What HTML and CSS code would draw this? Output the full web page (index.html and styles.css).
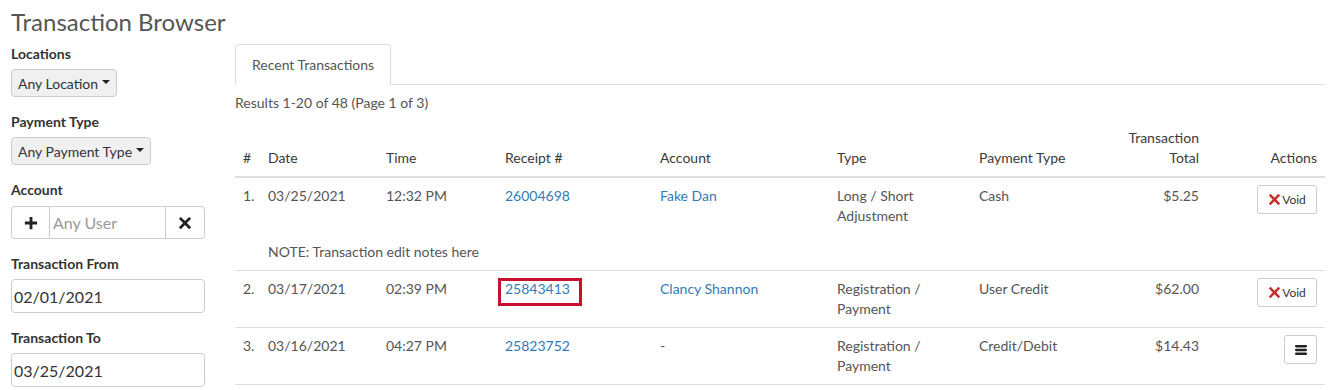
FILE: index.html
```html
<!DOCTYPE html>
<html lang="en">
<head>
    <meta charset="UTF-8">
    <meta name="viewport" content="width=device-width, initial-scale=1.0">
    <title>Transaction Browser</title>
    <link rel="stylesheet" href="styles.css">
</head>
<body>

<div class="page">
    <h1 class="page-title">Transaction Browser</h1>

    <div class="layout">
        <aside class="filters">
            <div class="field">
                <label>Locations</label>
                <button class="dropdown">Any Location <span class="caret"></span></button>
            </div>
            <div class="field">
                <label>Payment Type</label>
                <button class="dropdown">Any Payment Type <span class="caret"></span></button>
            </div>
            <div class="field field-group">
                <label>Account</label>
                <div class="input-group">
                    <span class="addon">
                        <svg viewBox="0 0 16 16" width="14" height="14"><path d="M6.4 1h3.2v5.4H15v3.2H9.6V15H6.4V9.6H1V6.4h5.4z"/></svg>
                    </span>
                    <input type="text" placeholder="Any User">
                    <span class="addon addon-right">
                        <svg viewBox="0 0 16 16" width="14" height="14"><path d="M3.2 1 8 5.8 12.8 1 15 3.2 10.2 8 15 12.8 12.8 15 8 10.2 3.2 15 1 12.8 5.8 8 1 3.2z"/></svg>
                    </span>
                </div>
            </div>
            <div class="field">
                <label>Transaction From</label>
                <input class="text-input" type="text" value="02/01/2021">
            </div>
            <div class="field">
                <label>Transaction To</label>
                <input class="text-input" type="text" value="03/25/2021">
            </div>
        </aside>

        <main class="results">
            <ul class="tabs">
                <li class="active">Recent Transactions</li>
            </ul>
            <p class="summary">Results 1-20 of 48 (Page 1 of 3)</p>

            <table class="tx-table">
                <colgroup>
                    <col style="width: 25px">
                    <col style="width: 118px">
                    <col style="width: 119px">
                    <col style="width: 155px">
                    <col style="width: 177px">
                    <col style="width: 142px">
                    <col style="width: 130px">
                    <col style="width: 106px">
                    <col>
                </colgroup>
                <thead>
                    <tr>
                        <th>#</th>
                        <th>Date</th>
                        <th>Time</th>
                        <th>Receipt #</th>
                        <th>Account</th>
                        <th>Type</th>
                        <th>Payment Type</th>
                        <th class="num">Transaction Total</th>
                        <th class="num">Actions</th>
                    </tr>
                </thead>
                <tbody>
                    <tr>
                        <td>1.</td>
                        <td>03/25/2021</td>
                        <td>12:32 PM</td>
                        <td><a href="#">26004698</a></td>
                        <td><a href="#">Fake Dan</a></td>
                        <td>Long / Short Adjustment</td>
                        <td>Cash</td>
                        <td class="num">$5.25</td>
                        <td class="num">
                            <button class="btn-void"><svg viewBox="0 0 16 16" width="13" height="13"><path d="M3.2 1 8 5.8 12.8 1 15 3.2 10.2 8 15 12.8 12.8 15 8 10.2 3.2 15 1 12.8 5.8 8 1 3.2z"/></svg>Void</button>
                        </td>
                    </tr>
                    <tr class="note-row">
                        <td></td>
                        <td colspan="8">NOTE: Transaction edit notes here</td>
                    </tr>
                </tbody>
                <tbody>
                    <tr>
                        <td>2.</td>
                        <td>03/17/2021</td>
                        <td>02:39 PM</td>
                        <td><a href="#" class="highlight">25843413</a></td>
                        <td><a href="#">Clancy Shannon</a></td>
                        <td>Registration / Payment</td>
                        <td>User Credit</td>
                        <td class="num">$62.00</td>
                        <td class="num">
                            <button class="btn-void"><svg viewBox="0 0 16 16" width="13" height="13"><path d="M3.2 1 8 5.8 12.8 1 15 3.2 10.2 8 15 12.8 12.8 15 8 10.2 3.2 15 1 12.8 5.8 8 1 3.2z"/></svg>Void</button>
                        </td>
                    </tr>
                </tbody>
                <tbody>
                    <tr>
                        <td>3.</td>
                        <td>03/16/2021</td>
                        <td>04:27 PM</td>
                        <td><a href="#">25823752</a></td>
                        <td>-</td>
                        <td>Registration / Payment</td>
                        <td>Credit/Debit</td>
                        <td class="num">$14.43</td>
                        <td class="num">
                            <button class="btn-menu"><svg viewBox="0 0 12 10" width="12" height="10"><rect width="12" height="2.4" rx="1.1"/><rect y="3.8" width="12" height="2.4" rx="1.1"/><rect y="7.6" width="12" height="2.4" rx="1.1"/></svg></button>
                        </td>
                    </tr>
                </tbody>
            </table>
        </main>
    </div>
</div>

</body>
</html>
```

FILE: styles.css
```css
body {
    font-family: Lato, "Liberation Sans", Arial, sans-serif;
    font-size: 14px;
    line-height: 20px;
    margin: 0;
    padding: 0;
    color: #555;
    background: #fff;
}

.page {
    padding: 0 7px 0 11px;
}

.page-title {
    margin: 0;
    padding: 6px 0 6px;
    font-size: 24px;
    line-height: 32px;
    font-weight: 400;
    color: #555;
}

.layout {
    display: grid;
    grid-template-columns: 194px 1fr;
    column-gap: 30px;
}

/* sidebar filters */

.field {
    display: flex;
    flex-direction: column;
    align-items: flex-start;
    margin-bottom: 15px;
}

.field label {
    font-weight: 700;
    color: #333;
    margin-bottom: 5px;
}

.field-group label {
    margin-bottom: 6px;
}

.dropdown {
    font-family: inherit;
    font-size: 14px;
    color: #333;
    height: 28px;
    padding: 0 6px 0 6px;
    background: #f0f0f0;
    border: 1px solid #ccc;
    border-radius: 4px;
    display: flex;
    align-items: center;
    gap: 4px;
}

.caret {
    display: inline-block;
    border-top: 4px solid #222;
    border-left: 4px solid transparent;
    border-right: 4px solid transparent;
    margin-top: -2px;
}

.input-group {
    display: flex;
    width: 100%;
    height: 33px;
}

.input-group .addon {
    width: 39px;
    flex: none;
    display: flex;
    align-items: center;
    justify-content: center;
    border: 1px solid #ccc;
    border-radius: 4px 0 0 4px;
    box-sizing: border-box;
    fill: #222;
}

.input-group .addon-right {
    width: 40px;
    border-radius: 0 4px 4px 0;
}

.input-group input {
    flex: 1;
    min-width: 0;
    border: 1px solid #ccc;
    border-left: none;
    border-right: none;
    font-family: inherit;
    font-size: 16px;
    padding: 0 3px;
    outline: none;
}

.input-group input::placeholder {
    color: #999;
}

.text-input {
    width: 100%;
    height: 34px;
    box-sizing: border-box;
    border: 1px solid #ccc;
    border-radius: 4px;
    font-family: inherit;
    font-size: 16px;
    color: #333;
    padding: 0 2px;
    outline: none;
}

/* results */

.tabs {
    list-style: none;
    margin: 0;
    padding: 0;
    display: flex;
    border-bottom: 1px solid #ddd;
}

.tabs li {
    padding: 10px 16px;
    border: 1px solid #ddd;
    border-bottom: none;
    border-radius: 4px 4px 0 0;
    color: #555;
    margin-bottom: -1px;
    background: #fff;
    height: 20px;
}

.summary {
    margin: 8px 0 7px;
}

.tx-table {
    width: 100%;
    table-layout: fixed;
    border-collapse: collapse;
}

.tx-table th {
    font-weight: 400;
    color: #3a3a3a;
    text-align: left;
    vertical-align: bottom;
    padding: 8px;
    border-bottom: 2px solid #ddd;
}

.tx-table td {
    padding: 8px;
    vertical-align: top;
}

.tx-table tbody {
    border-bottom: 1px solid #ddd;
}

.tx-table .num {
    text-align: right;
}

.tx-table tr > :first-child {
    padding-right: 0;
}

.tx-table a {
    color: #337ab7;
    text-decoration: none;
}

.tx-table a.highlight {
    position: relative;
}

.tx-table a.highlight::after {
    content: "";
    position: absolute;
    top: -2px;
    bottom: -9px;
    left: -7px;
    right: -12px;
    border: 3px solid #c8102e;
}

.btn-void,
.btn-menu {
    font-family: inherit;
    font-size: 12px;
    color: #333;
    background: #fff;
    border: 1px solid #ccc;
    border-radius: 3px;
    height: 29px;
    margin-top: -1px;
    display: inline-flex;
    align-items: center;
    justify-content: center;
}

.btn-void {
    width: 60px;
    padding: 0 6px;
    gap: 1px;
}

.btn-void svg {
    fill: #c9302c;
}

.btn-menu {
    width: 33px;
    padding: 0;
}

.btn-menu svg {
    fill: #222;
}
```
